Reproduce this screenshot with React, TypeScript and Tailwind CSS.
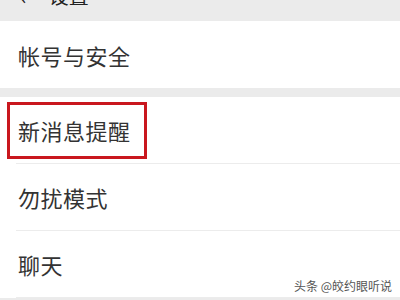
import React from 'react';

const font = { fontFamily: '"Noto Sans CJK SC", "Noto Sans", sans-serif' };

const Row = ({ label, boxed = false, divider = true }: { label: string; boxed?: boolean; divider?: boolean }) => (
  <div className="h-[67px] bg-white pl-[7px] flex items-center">
    <div
      className={`flex-1 h-full flex items-center ${divider ? 'border-b border-[#ececec] ml-[9px] pl-[2px]' : 'pl-[11px]'}`}
    >
      {boxed ? (
        <div className="-ml-[11px] w-[140px] h-[57px] border-[3px] border-[#c9171e] flex items-center pl-[8px]">
          <span className="text-[22px] leading-none text-[#333333] tracking-[0.5px]">{label}</span>
        </div>
      ) : (
        <span className="text-[22px] leading-none text-[#333333] tracking-[0.5px]">{label}</span>
      )}
    </div>
  </div>
);

export default function App() {
  return (
    <div className="w-[400px] h-[300px] overflow-hidden bg-[#ebebeb] relative flex flex-col" style={font}>
      <div className="h-[21px] shrink-0 overflow-hidden flex items-end pl-[20px] gap-[22px] pb-[15px] text-[#222]">
        <span className="text-[22px] leading-none">‹</span>
        <span className="text-[20px] leading-none">设置</span>
      </div>
      <Row label="帐号与安全" divider={false} />
      <div className="h-[9px] shrink-0" />
      <Row label="新消息提醒" boxed />
      <Row label="勿扰模式" />
      <Row label="聊天" />
      <div
        className="absolute right-[8px] bottom-[8px] text-[12px] leading-none text-[#555]"
        style={{ textShadow: '0 0 2px #fff' }}
      >
        头条 @皎约眼听说
      </div>
    </div>
  );
}
